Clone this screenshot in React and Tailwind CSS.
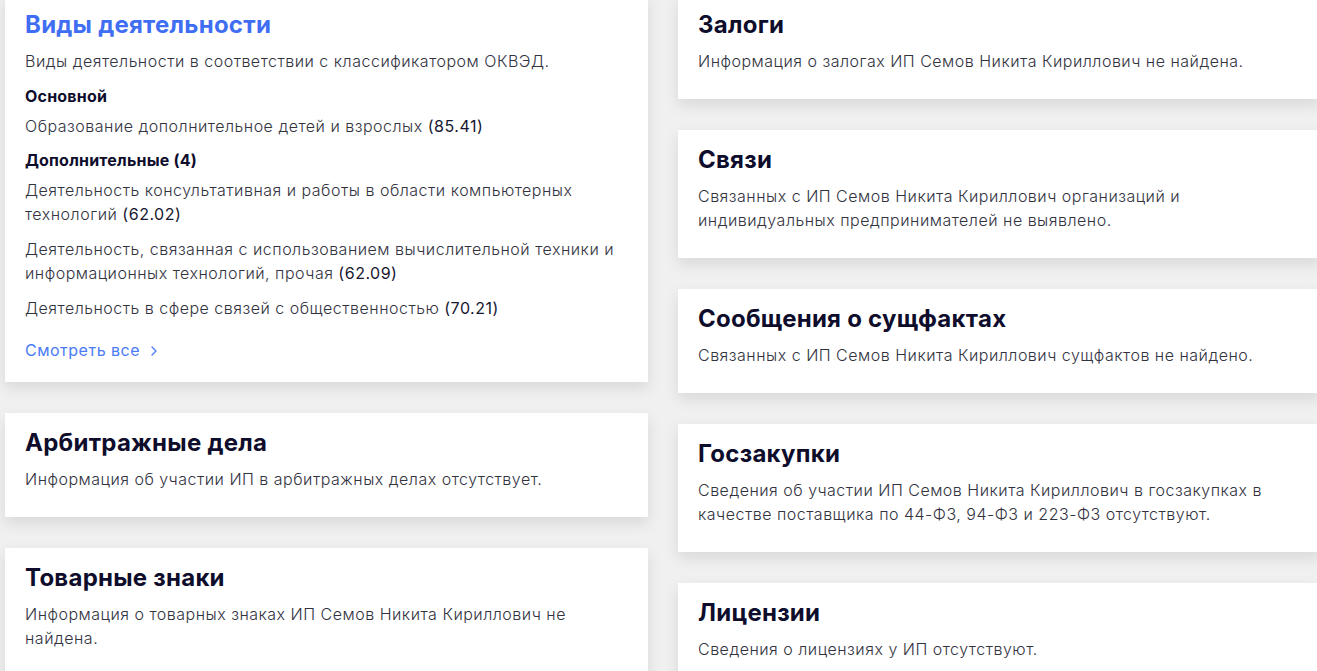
const cardCls = 'bg-white shadow-[0_6px_14px_rgba(0,0,0,0.10)] pt-[14px] pb-[26px] px-5';

function Code({ children }) {
  return <span className="font-normal text-[#161630]">({children})</span>;
}

function InfoCard({ title, children }) {
  return (
    <div className={cardCls}>
      <h2 className="text-2xl leading-8 font-bold tracking-[0.25px] text-[#0e0d2c]">{title}</h2>
      <p className="mt-2 text-base leading-6 font-light tracking-[0.5px] text-[#33333f]">{children}</p>
    </div>
  );
}

function ActivitiesCard() {
  return (
    <div className="bg-white shadow-[0_6px_14px_rgba(0,0,0,0.10)] pt-[14px] pb-5 px-5">
      <h2 className="text-2xl leading-8 font-bold tracking-[0.25px] text-[#3f6ef3]">Виды деятельности</h2>
      <div className="mt-2 text-base leading-6 font-light tracking-[0.5px] text-[#33333f]">
        <p>Виды деятельности в соответствии с классификатором ОКВЭД.</p>
        <h3 className="mt-[11px] font-bold tracking-[0.2px] text-[#0e0d2c]">Основной</h3>
        <p className="mt-[6px]">
          Образование дополнительное детей и взрослых <Code>85.41</Code>
        </p>
        <h3 className="mt-[10px] font-bold tracking-[0.2px] text-[#0e0d2c]">
          Дополнительные (4)
        </h3>
        <p className="mt-[6px]">
          Деятельность консультативная и работы в области компьютерных технологий <Code>62.02</Code>
        </p>
        <p className="mt-[11px]">
          Деятельность, связанная с использованием вычислительной техники и информационных технологий, прочая <Code>62.09</Code>
        </p>
        <p className="mt-[11px]">
          Деятельность в сфере связей с общественностью <Code>70.21</Code>
        </p>
        <a href="#" className="mt-[18px] flex items-center gap-[10px] font-normal text-[#4a7bf5]">
          Смотреть все
          <svg width="8" height="12" viewBox="0 0 8 12" fill="none" className="mt-[2px]">
            <path d="M2 2l4 4-4 4" stroke="#4a7bf5" strokeWidth="1.3" strokeLinecap="round" strokeLinejoin="round" />
          </svg>
        </a>
      </div>
    </div>
  );
}

export default function App() {
  return (
    <div className="h-[671px] overflow-hidden bg-[#f0f0f0] font-['Inter',sans-serif]">
      <div className="-mt-[5px] ml-[5px] grid grid-cols-[643px_643px] gap-x-[30px] items-start">
        <div className="flex flex-col gap-[31px]">
          <ActivitiesCard />
          <InfoCard title="Арбитражные дела">
            Информация об участии ИП в арбитражных делах отсутствует.
          </InfoCard>
          <InfoCard title="Товарные знаки">
            Информация о товарных знаках ИП Семов Никита Кириллович не найдена.
          </InfoCard>
        </div>
        <div className="flex flex-col gap-[31px]">
          <InfoCard title="Залоги">
            Информация о залогах ИП Семов Никита Кириллович не найдена.
          </InfoCard>
          <InfoCard title="Связи">
            Связанных с ИП Семов Никита Кириллович организаций и индивидуальных предпринимателей не выявлено.
          </InfoCard>
          <InfoCard title="Сообщения о сущфактах">
            Связанных с ИП Семов Никита Кириллович сущфактов не найдено.
          </InfoCard>
          <InfoCard title="Госзакупки">
            Сведения об участии ИП Семов Никита Кириллович в госзакупках в качестве поставщика по 44-ФЗ, 94-ФЗ и 223-ФЗ отсутствуют.
          </InfoCard>
          <InfoCard title="Лицензии">
            Сведения о лицензиях у ИП отсутствуют.
          </InfoCard>
        </div>
      </div>
    </div>
  );
}
